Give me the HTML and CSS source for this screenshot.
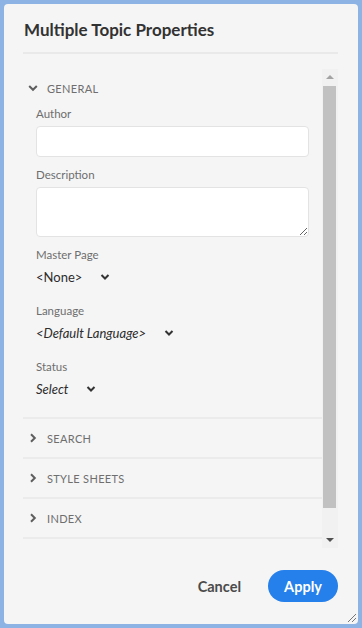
FILE: index.html
```html
<!DOCTYPE html>
<html lang="en">
<head>
    <meta charset="UTF-8">
    <meta name="viewport" content="width=device-width, initial-scale=1.0">
    <title>Multiple Topic Properties</title>
    <link rel="stylesheet" href="styles.css">
</head>
<body>

    <div class="dialog">
        <h1 class="title">Multiple Topic Properties</h1>

        <div class="body">
            <div class="panel">
                <section class="group open">
                    <div class="group-head">
                        <svg class="chev" width="10" height="10" viewBox="0 0 10 10"><path d="M1.2 3 L5 6.8 L8.8 3" fill="none" stroke="#5e5e5e" stroke-width="2"/></svg>
                        <span>General</span>
                    </div>
                    <div class="group-content">
                        <label class="field-label">Author</label>
                        <input type="text" class="text-input">

                        <label class="field-label">Description</label>
                        <textarea class="text-area"></textarea>

                        <label class="field-label">Master Page</label>
                        <div class="picker">
                            <span>&lt;None&gt;</span>
                            <svg width="10" height="8" viewBox="0 0 10 8"><path d="M1.5 2 L5 5.5 L8.5 2" fill="none" stroke="#333" stroke-width="2"/></svg>
                        </div>

                        <label class="field-label">Language</label>
                        <div class="picker italic">
                            <span>&lt;Default Language&gt;</span>
                            <svg width="10" height="8" viewBox="0 0 10 8"><path d="M1.5 2 L5 5.5 L8.5 2" fill="none" stroke="#333" stroke-width="2"/></svg>
                        </div>

                        <label class="field-label">Status</label>
                        <div class="picker italic">
                            <span>Select</span>
                            <svg width="10" height="8" viewBox="0 0 10 8"><path d="M1.5 2 L5 5.5 L8.5 2" fill="none" stroke="#333" stroke-width="2"/></svg>
                        </div>
                    </div>
                </section>

                <section class="group">
                    <div class="group-head">
                        <svg class="chev" width="10" height="10" viewBox="0 0 10 10"><path d="M3 1.2 L6.8 5 L3 8.8" fill="none" stroke="#5e5e5e" stroke-width="2"/></svg>
                        <span>Search</span>
                    </div>
                </section>

                <section class="group">
                    <div class="group-head">
                        <svg class="chev" width="10" height="10" viewBox="0 0 10 10"><path d="M3 1.2 L6.8 5 L3 8.8" fill="none" stroke="#5e5e5e" stroke-width="2"/></svg>
                        <span>Style Sheets</span>
                    </div>
                </section>

                <section class="group">
                    <div class="group-head">
                        <svg class="chev" width="10" height="10" viewBox="0 0 10 10"><path d="M3 1.2 L6.8 5 L3 8.8" fill="none" stroke="#5e5e5e" stroke-width="2"/></svg>
                        <span>Index</span>
                    </div>
                </section>
                <section class="group"></section>
            </div>

            <div class="scrollbar">
                <div class="sb-btn">
                    <svg width="8" height="4" viewBox="0 0 8 4"><path d="M0 4 L4 0 L8 4 Z" fill="#a3a3a3"/></svg>
                </div>
                <div class="sb-track"><div class="sb-thumb"></div></div>
                <div class="sb-btn">
                    <svg width="8" height="4" viewBox="0 0 8 4"><path d="M0 0 L8 0 L4 4 Z" fill="#505050"/></svg>
                </div>
            </div>
        </div>

        <div class="actions">
            <button class="btn-cancel">Cancel</button>
            <button class="btn-apply">Apply</button>
        </div>

        <svg class="grip" width="8" height="8" viewBox="0 0 8 8"><path d="M8 0 L0 8 M8 4 L4 8" stroke="#777" stroke-width="1"/></svg>
    </div>

</body>
</html>
```

FILE: styles.css
```css
body {
    margin: 0;
    padding: 4px;
    background-color: #8cb3e3;
    font-family: Lato, "Open Sans", sans-serif;
}
.dialog {
    position: relative;
    box-sizing: border-box;
    height: 620px;
    padding: 0 20px 22px 19px;
    background-color: #f5f5f5;
    border-radius: 4px;
    display: flex;
    flex-direction: column;
}
.title {
    margin: 0;
    padding: 14px 0 10px 1px;
    font-size: 17px;
    line-height: 24px;
    font-weight: 700;
    color: #323232;
    border-bottom: 2px solid #e9e9e9;
}
.body {
    margin-top: 15px;
    height: 479px;
    display: flex;
}
.panel {
    flex: 1;
    overflow: hidden;
}
.group {
    border-top: 2px solid #ebebeb;
}
.group:first-child {
    border-top: none;
}
.group-head {
    height: 38px;
    display: flex;
    align-items: center;
    padding-left: 5px;
    font-size: 11px;
    letter-spacing: 0.03em;
    text-transform: uppercase;
    color: #6e6e6e;
}
.group:first-child .group-head {
    height: 38px;
    margin-bottom: -1px;
}
.group-head .chev {
    margin-right: 9px;
}
.group-content {
    display: flex;
    flex-direction: column;
    align-items: flex-start;
    padding: 0 13px 12px 13px;
}
.field-label {
    font-size: 11.5px;
    line-height: 16px;
    color: #6e6e6e;
    margin: 10px 0 4px 0;
}
.field-label:first-child {
    margin-top: 0;
}
.text-input,
.text-area {
    box-sizing: border-box;
    width: 100%;
    border: 1px solid #e3e3e3;
    border-radius: 4px;
    background: white;
    font-family: inherit;
}
.text-input {
    height: 31px;
}
.text-area {
    height: 50px;
    resize: vertical;
}
.picker {
    height: 28px;
    display: flex;
    align-items: center;
    gap: 18px;
    font-size: 13px;
    color: #2c2c2c;
    margin-bottom: 2px;
}
.picker.italic {
    font-style: italic;
}
.field-label + .picker {
    margin-top: -4px;
}
.scrollbar {
    width: 16px;
    display: flex;
    flex-direction: column;
    background-color: #f1f1f1;
}
.sb-btn {
    height: 16px;
    display: flex;
    align-items: center;
    justify-content: center;
}
.sb-track {
    flex: 1;
}
.sb-thumb {
    height: 422px;
    margin: 1px 2px 0 1px;
    background-color: #c1c1c1;
}
.actions {
    margin-top: 22px;
    display: flex;
    justify-content: flex-end;
    align-items: center;
}
button {
    font-family: inherit;
    font-size: 14.5px;
    font-weight: 700;
    border: none;
    cursor: pointer;
}
.btn-cancel {
    background: none;
    color: #4b4b4b;
    padding: 0 14px;
    margin-right: 13px;
}
.btn-apply {
    height: 32px;
    width: 70px;
    padding: 0;
    border-radius: 16px;
    background-color: #2680eb;
    color: white;
}
.grip {
    position: absolute;
    right: 2px;
    bottom: 2px;
}
```
